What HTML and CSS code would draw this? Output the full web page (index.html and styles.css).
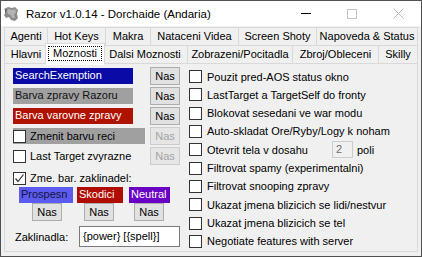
FILE: index.html
```html
<!DOCTYPE html>
<html lang="cs">
<head>
  <meta charset="UTF-8" />
  <title>Razor</title>
  <link rel="stylesheet" href="styles.css">
</head>
<body>
  <div class="window">
    <div class="titlebar">
      <svg class="app-icon" width="16" height="16" viewBox="0 0 16 16">
        <path d="M1 3 L5 1 L9 2 L12 1 L15 4 L14 8 L15 12 L12 15 L8 14 L6 11 L3 12 L1 9 L3 6 Z" fill="#8c8c8c"/>
        <path d="M5 3 L9 4 L12 3 L13 6 L11 9 L12 12 L9 12 L8 9 L5 8 L4 5 Z" fill="#b4b4b4"/>
        <path d="M2 4 L4 3 L3 6 L2 8 Z" fill="#5e5e5e"/>
      </svg>
      <span class="title">Razor v1.0.14 - Dorchaide (Andaria)</span>
      <div class="controls">
        <div class="ctl"><span class="min"></span></div>
        <div class="ctl"><span class="max"></span></div>
        <div class="ctl">
          <svg width="11" height="11" viewBox="0 0 11 11"><path d="M0.5 0.5 L10.5 10.5 M10.5 0.5 L0.5 10.5" stroke="#b8b8b8" stroke-width="1"/></svg>
        </div>
      </div>
    </div>

    <div class="tabs">
      <div class="tab-row upper">
        <div class="tab">Agenti</div>
        <div class="tab">Hot Keys</div>
        <div class="tab">Makra</div>
        <div class="tab">Nataceni Videa</div>
        <div class="tab">Screen Shoty</div>
        <div class="tab">Napoveda &amp; Status</div>
      </div>
      <div class="tab-row lower">
        <div class="tab">Hlavni</div>
        <div class="tab active"><span class="focus">Moznosti</span></div>
        <div class="tab">Dalsi Moznosti</div>
        <div class="tab">Zobrazeni/Pocitadla</div>
        <div class="tab">Zbroj/Obleceni</div>
        <div class="tab">Skilly</div>
      </div>
    </div>

    <div class="page">
      <div class="col-left">
        <div class="row">
          <div class="cell"><div class="swatch sw-blue">SearchExemption</div></div>
          <button class="nas">Nas</button>
        </div>
        <div class="row">
          <div class="cell"><div class="swatch sw-gray">Barva zpravy Razoru</div></div>
          <button class="nas">Nas</button>
        </div>
        <div class="row">
          <div class="cell"><div class="swatch sw-red">Barva varovne zpravy</div></div>
          <button class="nas">Nas</button>
        </div>
        <div class="row">
          <div class="cell"><div class="check-bar"><span class="box"></span>Zmenit barvu reci</div></div>
          <button class="nas" disabled>Nas</button>
        </div>
        <div class="row">
          <div class="cell"><span class="box"></span>Last Target zvyrazne</div>
          <button class="nas" disabled>Nas</button>
        </div>
        <div class="row spell-row">
          <span class="box checked">
            <svg width="11" height="11" viewBox="0 0 11 11"><path d="M1.5 5.5 L4 8.5 L9.5 1.5" fill="none" stroke="#333" stroke-width="1.2"/></svg>
          </span>Zme. bar. zaklinadel:
        </div>
        <div class="spell-colors">
          <div class="chip chip-good">Prospesn</div>
          <div class="chip chip-bad">Skodici</div>
          <div class="chip chip-neutral">Neutral</div>
        </div>
        <div class="spell-buttons">
          <button class="nas">Nas</button>
          <button class="nas">Nas</button>
          <button class="nas">Nas</button>
        </div>
        <div class="row format-row">
          <span class="format-label">Zaklinadla:</span>
          <div class="textbox">{power} [{spell}]</div>
        </div>
      </div>

      <div class="col-right">
        <div class="opt"><span class="box"></span>Pouzit pred-AOS status okno</div>
        <div class="opt"><span class="box"></span>LastTarget a TargetSelf do fronty</div>
        <div class="opt"><span class="box"></span>Blokovat sesedani ve war modu</div>
        <div class="opt"><span class="box"></span>Auto-skladat Ore/Ryby/Logy k noham</div>
        <div class="opt"><span class="box"></span><span class="opt-label">Otevrit tela v dosahu</span><span class="num">2</span><span class="unit">poli</span></div>
        <div class="opt"><span class="box"></span>Filtrovat spamy (experimentalni)</div>
        <div class="opt"><span class="box"></span>Filtrovat snooping zpravy</div>
        <div class="opt"><span class="box"></span>Ukazat jmena blizicich se lidi/nestvur</div>
        <div class="opt"><span class="box"></span>Ukazat jmena blizicich se tel</div>
        <div class="opt"><span class="box"></span>Negotiate features with server</div>
      </div>
    </div>
  </div>
</body>
</html>
```

FILE: styles.css
```css
* {
  margin: 0;
  padding: 0;
  box-sizing: border-box;
}

body {
  font: 11px "Liberation Sans", Arial, sans-serif;
  color: #000;
  background: #f0f0f0;
}

.window {
  width: 422px;
  height: 257px;
  border: 1px solid #505050;
  background: #f0f0f0;
  display: flex;
  flex-direction: column;
}

/* title bar */
.titlebar {
  height: 25px;
  background: #fff;
  display: flex;
  align-items: center;
  flex-shrink: 0;
}
.app-icon {
  margin: 0 7px 0 2px;
}
.title {
  flex: 1;
  font-size: 11.5px;
}
.controls {
  display: flex;
  align-self: stretch;
}
.ctl {
  width: 46px;
  display: flex;
  align-items: center;
  justify-content: center;
}
.min {
  width: 10px;
  height: 1px;
  background: #000;
}
.max {
  width: 10px;
  height: 10px;
  border: 1px solid #c4c4c4;
}

/* tabs */
.tabs {
  padding: 1px 3px 0;
  flex-shrink: 0;
}
.tab-row {
  display: flex;
  height: 19px;
}
.tab-row.lower {
  margin-top: -1px;
}
.tab {
  flex: none;
  border: 1px solid #d9d9d9;
  margin-left: -1px;
  background: #f0f0f0;
  text-align: center;
  line-height: 17px;
  white-space: nowrap;
  overflow: hidden;
}
.tab:first-child {
  margin-left: 0;
}
.tab:last-child {
  flex: 1;
}
.upper .tab:nth-child(1) { width: 44px; }
.upper .tab:nth-child(2) { width: 59px; }
.upper .tab:nth-child(3) { width: 46px; }
.upper .tab:nth-child(4) { width: 89px; }
.upper .tab:nth-child(5) { width: 79px; }
.lower .tab:nth-child(1) { width: 44px; }
.lower .tab:nth-child(2) { width: 60px; }
.lower .tab:nth-child(3) { width: 86px; }
.lower .tab:nth-child(4) { width: 106px; }
.lower .tab:nth-child(5) { width: 87px; }

.tab.active {
  position: relative;
  z-index: 1;
  background: #fff;
  border-bottom-color: #fff;
  margin: -2px -2px -1px -3px;
  height: 22px;
  padding-top: 2px;
  line-height: 13px;
}
.focus {
  display: inline-block;
  border: 1px dotted #000;
  padding: 0 4px;
}

/* page */
.page {
  flex: 1;
  margin: -1px 3px 4px;
  border: 1px solid #d9d9d9;
  display: flex;
}
.col-left {
  width: 184px;
  padding: 2px 0 0 8px;
}
.row {
  display: flex;
  align-items: center;
  height: 20px;
}
.cell {
  width: 137px;
  display: flex;
  align-items: center;
}
.swatch {
  width: 120px;
  height: 16px;
  line-height: 14px;
  padding-left: 2px;
  overflow: hidden;
  white-space: nowrap;
}
.sw-blue {
  background: #0a0aa6;
  color: #fff;
}
.sw-gray {
  background: #a0a0a0;
  color: #111;
}
.sw-red {
  background: #b01200;
  color: #fff;
}
.check-bar {
  width: 132px;
  height: 16px;
  background: #a0a0a0;
  display: flex;
  align-items: center;
}

.nas {
  width: 30px;
  height: 18px;
  font: inherit;
  color: #000;
  background: #e1e1e1;
  border: 1px solid #adadad;
}
.nas:disabled {
  color: #a3a3a3;
  background: #e6e6e6;
  border-color: #cccccc;
}

.box {
  width: 13px;
  height: 13px;
  border: 1px solid #333;
  background: #fff;
  margin-right: 4px;
  flex-shrink: 0;
  display: flex;
  align-items: center;
  justify-content: center;
}

.spell-row {
  margin-top: 2px;
}
.spell-colors {
  display: flex;
  height: 16px;
  margin: -1px 0 0 6px;
}
.chip {
  height: 16px;
  line-height: 15px;
  padding-left: 2px;
  white-space: nowrap;
}
.chip-good {
  width: 54px;
  background: #5b5bef;
  color: #14143c;
}
.chip-bad {
  width: 46px;
  margin-left: 4px;
  background: #b00c00;
  color: #fff;
}
.chip-neutral {
  width: 41px;
  margin-left: 6px;
  background: #6a00c4;
  color: #fff;
}
.spell-buttons {
  display: flex;
  margin-left: 19px;
  gap: 22px;
}
.spell-buttons .nas:last-child {
  margin-left: -2px;
}

.format-row {
  margin-top: 5px;
  height: 21px;
}
.format-label {
  width: 66px;
  padding-left: 2px;
}
.textbox {
  width: 101px;
  height: 21px;
  border: 1px solid #7a7a7a;
  background: #fff;
  padding-left: 3px;
  line-height: 19px;
}

.col-right {
  flex: 1;
  display: flex;
  flex-direction: column;
  justify-content: space-between;
  padding: 6px 0 3px;
}
.opt {
  display: flex;
  align-items: center;
  height: 13px;
  white-space: nowrap;
}
.opt .box {
  margin-right: 5px;
}
.opt-label {
  width: 125px;
}
.num {
  width: 21px;
  height: 17px;
  border: 1px solid #cccccc;
  background: #f0f0f0;
  color: #6d6d6d;
  line-height: 15px;
  padding-left: 3px;
  flex-shrink: 0;
}
.unit {
  margin-left: 4px;
}
```
